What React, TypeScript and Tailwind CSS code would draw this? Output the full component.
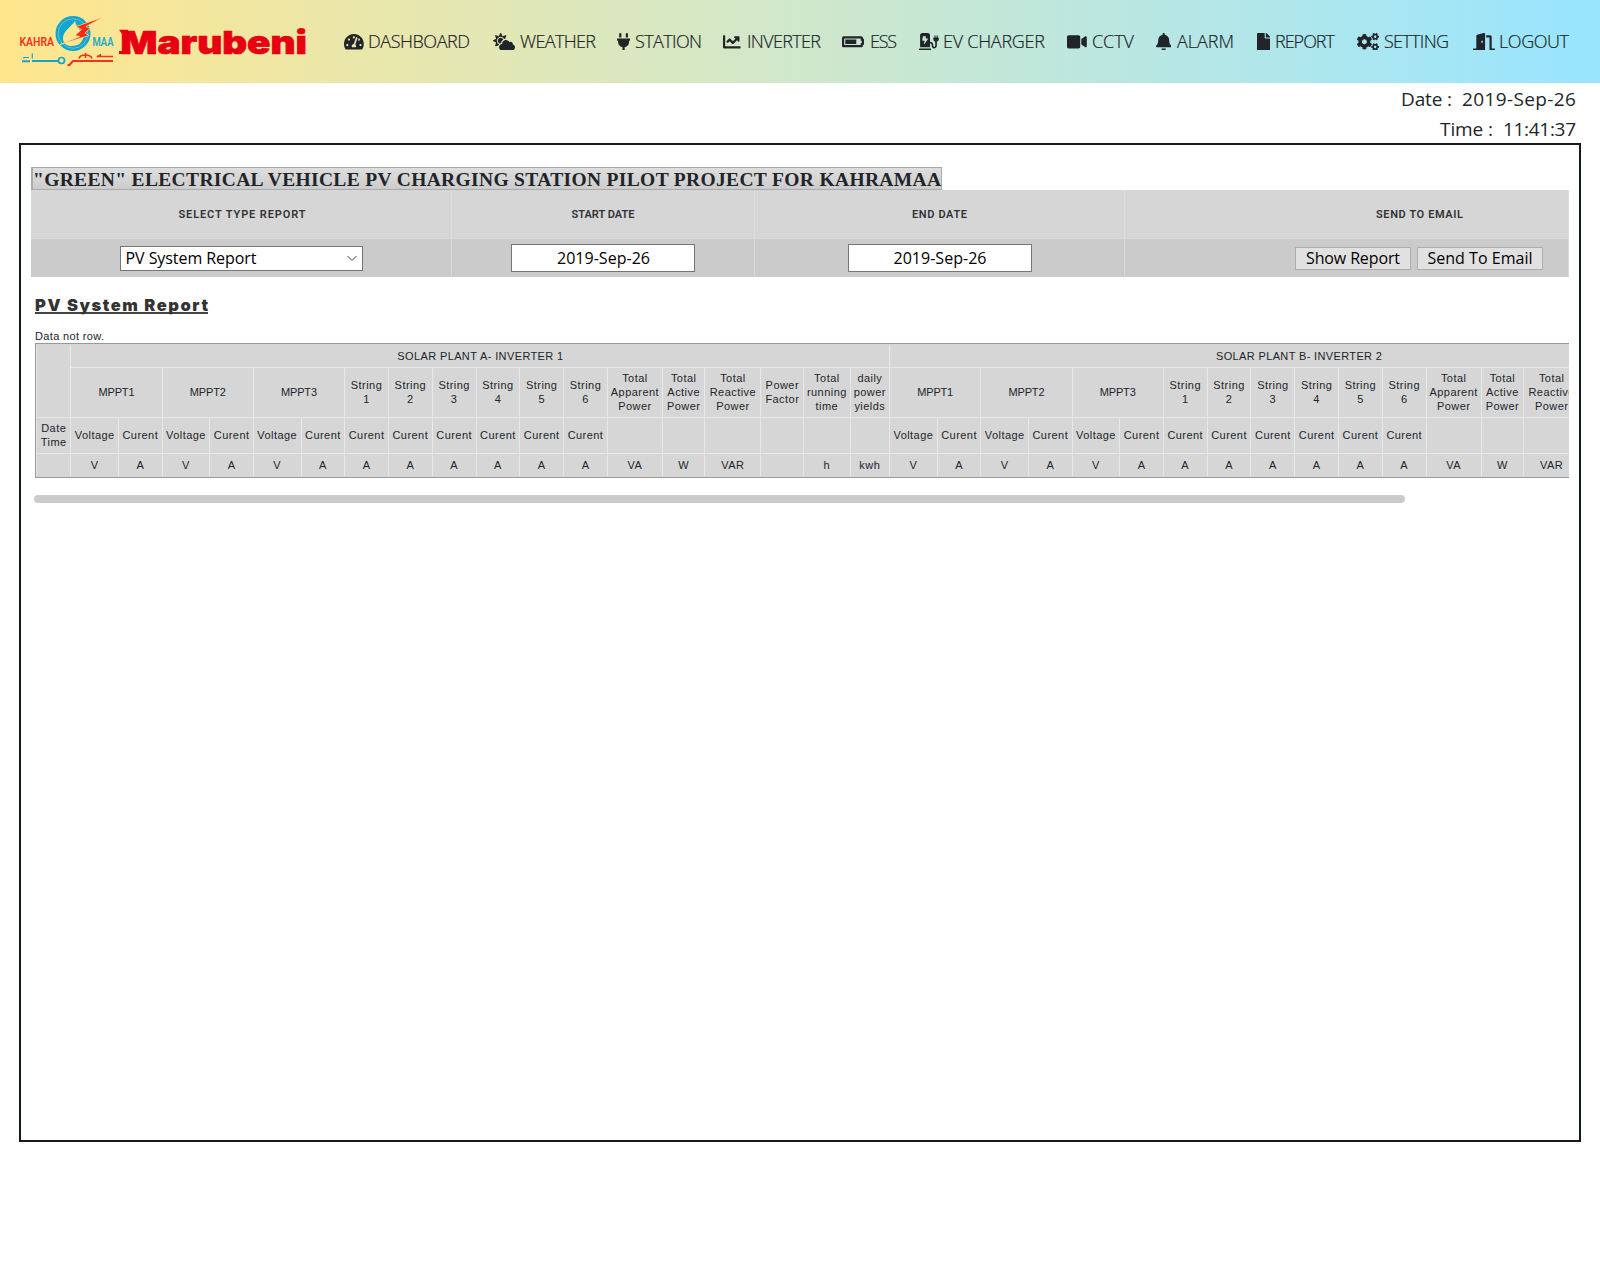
import React, { useLayoutEffect, useRef, useState } from "react";
import {
  FaTachometerAlt,
  FaCloudSun,
  FaPlug,
  FaChartLine,
  FaBatteryThreeQuarters,
  FaChargingStation,
  FaVideo,
  FaBell,
  FaFile,
  FaCogs,
  FaDoorOpen,
} from "react-icons/fa";

/** Text whose tracking is computed so that it spans a given width. */
function Fit({ text, width, className = "" }: { text: string; width: number; className?: string }) {
  const ref = useRef<HTMLSpanElement>(null);
  const [spacing, setSpacing] = useState(0);
  useLayoutEffect(() => {
    const el = ref.current;
    if (!el || text.length < 2) return;
    el.style.letterSpacing = "0px";
    const natural = el.getBoundingClientRect().width;
    setSpacing((width - natural) / (text.length - 1));
  }, [text, width]);
  return (
    <span
      ref={ref}
      className={`inline-block whitespace-nowrap ${className}`}
      style={{ letterSpacing: `${spacing}px`, marginRight: `${-spacing}px` }}
    >
      {text}
    </span>
  );
}

const nav = [
  { label: "DASHBOARD", icon: FaTachometerAlt, size: "w-[19.800px]", slot: "w-[149px]", box: "w-[24px]", width: 102 },
  { label: "WEATHER", icon: FaCloudSun, size: "w-[22px]", slot: "w-[124px]", box: "w-[27px]", width: 76 },
  { label: "STATION", icon: FaPlug, size: "w-[13.200px]", slot: "w-[106px]", box: "w-[18px]", width: 67 },
  { label: "INVERTER", icon: FaChartLine, size: "w-[17.600px]", slot: "w-[119px]", box: "w-[24px]", width: 74 },
  { label: "ESS", icon: FaBatteryThreeQuarters, size: "w-[22px]", slot: "w-[77px]", box: "w-[28px]", width: 27 },
  { label: "EV CHARGER", icon: FaChargingStation, size: "w-[19.800px]", slot: "w-[148px]", box: "w-[24px]", width: 102 },
  { label: "CCTV", icon: FaVideo, size: "w-[19.800px]", slot: "w-[89px]", box: "w-[25px]", width: 42 },
  { label: "ALARM", icon: FaBell, size: "w-[15.400px]", slot: "w-[101px]", box: "w-[21px]", width: 57 },
  { label: "REPORT", icon: FaFile, size: "w-[13.200px]", slot: "w-[100px]", box: "w-[18px]", width: 60 },
  { label: "SETTING", icon: FaCogs, size: "w-[22px]", slot: "w-[116px]", box: "w-[27px]", width: 65 },
  { label: "LOGOUT", icon: FaDoorOpen, size: "w-[22px]", slot: "w-[100px]", box: "w-[26px]", width: 70 },
];

function Logo() {
  return (
    <svg className="block h-[83px] w-[330px]" viewBox="0 0 330 83">
      <circle cx="73" cy="33.5" r="17.5" fill="#12a5cf" />
      <circle cx="73" cy="33.5" r="14.8" fill="none" stroke="#7cc8c9" strokeWidth="0.8" />
      <path d="M75 21 C71 27 63 31 63 38.500 C63 43.500 67 46 71.500 46 C79 46 83 42 83.500 36 C81 30 76 27 75 21 Z" fill="#f9e891" />
      <path d="M103.500 17 L76 26.500 L81.500 29.500 L75 35.500 L80 36.500 L60 44.500 L89 35.500 L85 33 L90 28.500 L86 26.500 Z" fill="#ff2a13" stroke="#f9e891" strokeWidth="0.7" />
      <text x="19.500" y="45.700" textLength="34.500" lengthAdjust="spacingAndGlyphs" fontFamily="Roboto" fontWeight="600" fontSize="13.500" fill="#f5321c">KAHRA</text>
      <text x="92.500" y="46.300" textLength="21" lengthAdjust="spacingAndGlyphs" fontFamily="Roboto" fontWeight="600" fontSize="13.500" fill="#25a6c4">MAA</text>
      <g fill="none" stroke="#16a5c6" strokeWidth="2">
        <path d="M22 61.200 H30 M32 61 H58" />
        <circle cx="61.500" cy="60.500" r="3" strokeWidth="1.700" />
        <path d="M32.300 53.500 V58.500 M24 58.500 V57.500 H29" strokeWidth="1.200" />
      </g>
      <g fill="none" stroke="#f5321c" strokeWidth="2">
        <path d="M67.500 65 H69.500 L73 61 H113" />
        <path d="M79 58.500 Q80 55 85 55 Q91 55 92 58.500 M85.500 53 V58" strokeWidth="1.600" />
        <path d="M97 56.500 H113 M97 57 L101 54.500" strokeWidth="1.600" />
      </g>
      <path d="M119 29.800 H128 V34 H122 Z M119 54 V51 H128 V54 Z" fill="#e60012" />
      <text x="120.500" y="53.500" textLength="186.500" lengthAdjust="spacingAndGlyphs" fontFamily="Inter" fontWeight="900" fontSize="32" fill="#e60012" stroke="#e60012" strokeWidth="0.700">Marubeni</text>
    </svg>
  );
}

const units = ["V", "A", "V", "A", "V", "A", "A", "A", "A", "A", "A", "A", "VA", "W", "VAR", "", "h", "kwh"];
const totals = [
  ["Total", "Apparent", "Power"],
  ["Total", "Active", "Power"],
  ["Total", "Reactive", "Power"],
  ["Power", "Factor"],
  ["Total", "running", "time"],
  ["daily", "power", "yields"],
];
const plants = ["SOLAR PLANT A- INVERTER 1", "SOLAR PLANT B- INVERTER 2"];
const cell = "flex flex-col items-center justify-center border-l border-[#e8e8e8] leading-[14px]";

function Plant({ title }: { title: string }) {
  return (
    <div className="grid shrink-0 grid-cols-[47.6px_43.700px_47.600px_43.700px_47.600px_43.600px_43.800px_43.800px_43.800px_43.800px_43.800px_43.800px_55px_42.500px_56px_42.800px_46.300px_39.600px] grid-rows-[22px_50px_36px_23px]">
      <div className={`${cell} col-span-18`}>
        <Fit text={title} width={166} />
      </div>
      {["MPPT1", "MPPT2", "MPPT3"].map((m) => (
        <div key={m} className={`${cell} col-span-2 border-t pb-[2px]`}>
          <Fit text={m} width={36} />
        </div>
      ))}
      {[1, 2, 3, 4, 5, 6].map((n) => (
        <div key={n} className={`${cell} border-t pb-[2px]`}>
          <span>String</span>
          <span>{n}</span>
        </div>
      ))}
      {totals.map((lines, i) => (
        <div key={i} className={`${cell} border-t pb-[2px]`}>
          {lines.map((l) => (
            <span key={l}>{l}</span>
          ))}
        </div>
      ))}
      {units.map((_, i) => (
        <div key={i} className={`${cell} border-t pb-px`}>
          {i < 12 ? (i < 6 && i % 2 === 0 ? "Voltage" : "Curent") : ""}
        </div>
      ))}
      {units.map((u, i) => (
        <div key={i} className={`${cell} border-t`}>
          {u}
        </div>
      ))}
    </div>
  );
}

const headCell = "flex items-center justify-center border-r border-[#dedede] pt-[2px] font-['Roboto'] text-[11px] font-semibold text-[#333]";
const inputCell = "flex items-center border-r border-t border-[#dadada]";

export default function App() {
  return (
    <div className="h-[1280px] w-[1600px] overflow-hidden bg-white font-['Open_Sans',sans-serif] text-[#212529]">
      <header className="flex h-[83px] bg-linear-to-r from-[#ffe68c] to-[#98e5ff]">
        <div className="w-[344px] shrink-0">
          <Logo />
        </div>
        <nav className="flex h-[83px] items-center">
          {nav.map(({ label, icon: Icon, size, slot, box, width }) => (
            <a key={label} className={`flex shrink-0 items-center ${slot}`}>
              <span className={`shrink-0 ${box}`}>
                <Icon className={`h-[17.600px] max-w-none ${size}`} />
              </span>
              <Fit text={label} width={width} className="text-[18px] font-light [-webkit-text-stroke:0.2px_#212529]" />
            </a>
          ))}
        </nav>
      </header>

      <div className="flex h-[60px] flex-col items-end pr-6 pt-px text-[19px] leading-[30px]">
        <div className="flex gap-[10px]">
          <Fit text="Date :" width={51} />
          <Fit text="2019-Sep-26" width={114} />
        </div>
        <div className="flex gap-[10px]">
          <Fit text="Time :" width={53} />
          <Fit text="11:41:37" width={73} />
        </div>
      </div>

      <main className="ml-[19px] h-[999px] w-[1562px] border-2 border-[#16191d] pl-[10px] pt-[22px]">
        <h1 className="flex h-6 w-[911px] items-center border border-b-2 border-l-2 border-[#aaa] bg-linear-to-b from-[#dedede] to-[#cccccc] pt-[3px] font-['Liberation_Serif',serif] text-[19.500px] font-bold leading-none">
          <Fit text={'"GREEN" ELECTRICAL VEHICLE PV CHARGING STATION PILOT PROJECT FOR KAHRAMAA'} width={908} />
        </h1>

        <section className="-mt-px w-[1538px]">
          <div className="grid h-12 grid-cols-[421px_303px_370px_444px] bg-[#d6d6d6]">
            <div className={headCell}>
              <Fit text="SELECT TYPE REPORT" width={127} className="ml-[2px]" />
            </div>
            <div className={headCell}>
              <Fit text="START DATE" width={63} />
            </div>
            <div className={headCell}>
              <Fit text="END DATE" width={55} />
            </div>
            <div className={`${headCell} pl-[146px]`}>
              <Fit text="SEND TO EMAIL" width={87} />
            </div>
          </div>
          <div className="grid h-[39px] grid-cols-[421px_303px_370px_444px] bg-[#cbcbcb] text-[16px] text-black">
            <div className={`${inputCell} justify-center`}>
              <div className="flex h-[25px] w-[243px] items-center justify-between border border-[#767676] bg-white pl-[5px] pr-1">
                <Fit text="PV System Report" width={131} />
                <svg className="h-3 w-3" viewBox="0 0 12 12" fill="none" stroke="#444">
                  <path d="M1.500 4 L6 8.500 L10.500 4" />
                </svg>
              </div>
            </div>
            <div className={`${inputCell} justify-center`}>
              <div className="flex h-7 w-[184px] items-center justify-center border border-[#767676] bg-white pl-px">
                <Fit text="2019-Sep-26" width={93} />
              </div>
            </div>
            <div className={`${inputCell} justify-center`}>
              <div className="flex h-7 w-[184px] items-center justify-center border border-[#767676] bg-white pl-px">
                <Fit text="2019-Sep-26" width={93} />
              </div>
            </div>
            <div className={`${inputCell} justify-end gap-[6px] pr-[25px]`}>
              <button className="flex h-[23px] w-[116px] items-center justify-center border border-[#adadad] bg-[#e1e1e1]">
                <Fit text="Show Report" width={94} />
              </button>
              <button className="flex h-[23px] w-[126px] items-center justify-center border border-[#adadad] bg-[#e1e1e1]">
                <Fit text="Send To Email" width={105} />
              </button>
            </div>
          </div>
        </section>

        <section className="w-[1538px] pl-1 pt-[17px] font-['Liberation_Sans',sans-serif] text-[11px] text-[#212529]">
          <h2 className="h-[34px] font-['Inter'] text-[16.500px] font-black leading-[22px] text-[#333]">
            <span className="inline-block h-[20px] border-b-2 border-[#444]">
              <Fit text="PV System Report" width={173} />
            </span>
          </h2>
          <p className="h-[15px] pt-px leading-[15px]">
            <Fit text="Data not row." width={69} />
          </p>
          <div className="overflow-hidden">
            <div className="flex w-[1700px] border border-[#999] bg-[#d6d6d6] pb-px pt-px tracking-[0.450px]">
              <div className="grid w-[34.400px] shrink-0 grid-rows-[72px_36px_23px] border-l border-[#e6e6e6]">
                <div />
                <div className="flex flex-col items-center justify-center border-t border-[#e6e6e6] pb-px leading-[14px]">
                  <span>Date</span>
                  <span>Time</span>
                </div>
                <div className="border-t border-[#e6e6e6]" />
              </div>
              {plants.map((p) => (
                <Plant key={p} title={p} />
              ))}
            </div>
          </div>
          <div className="-ml-px mt-[17px] h-2 w-[1371px] rounded-full bg-[#cbcbcb]" />
        </section>
      </main>
    </div>
  );
}
